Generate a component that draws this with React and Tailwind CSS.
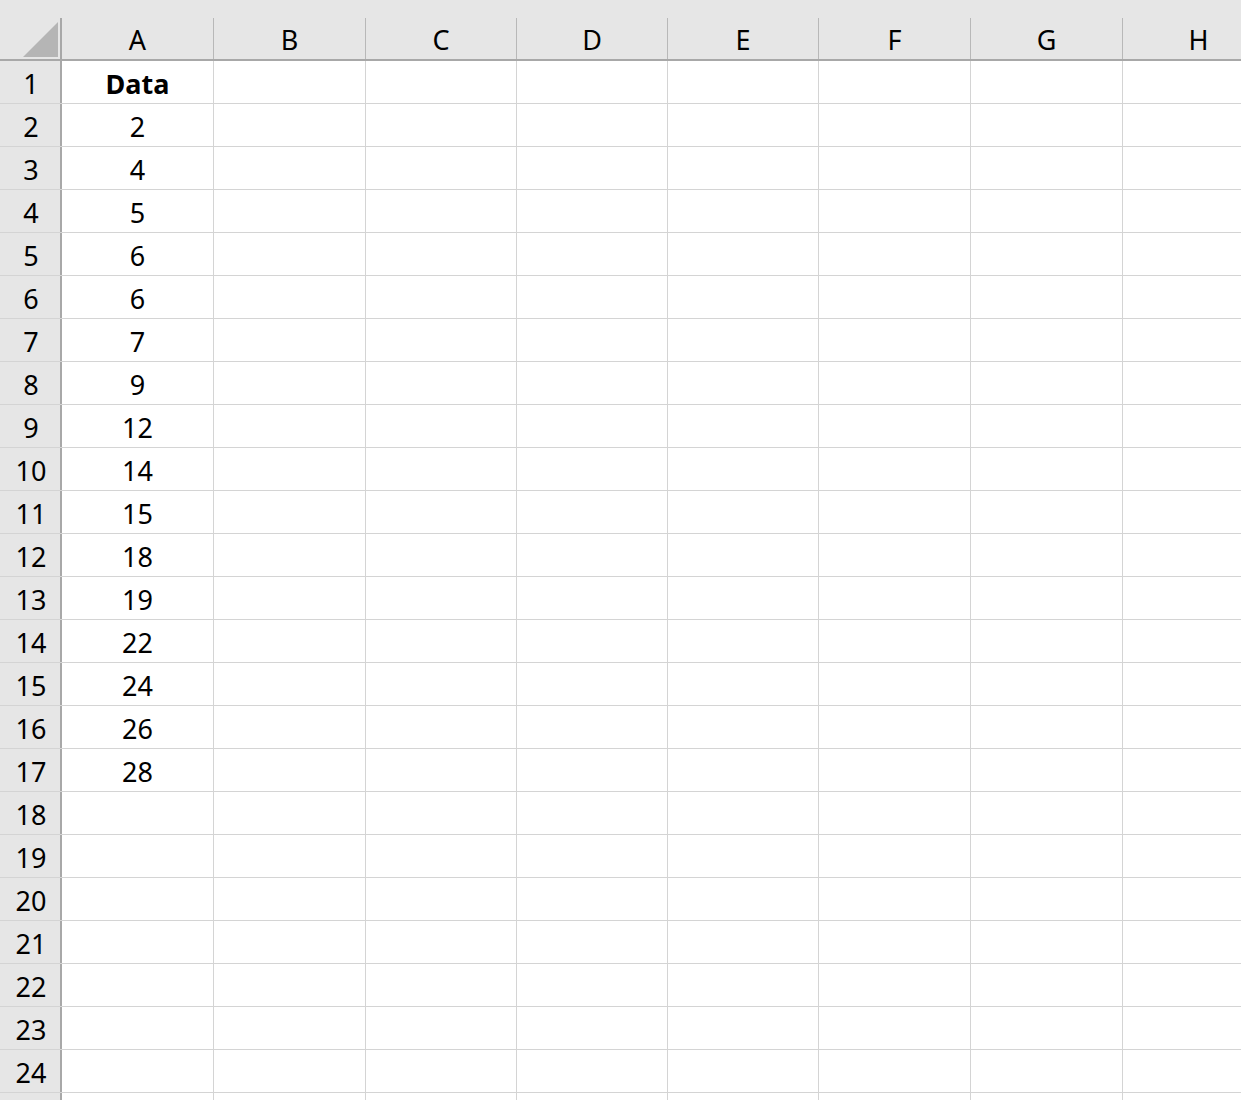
import React from 'react';

const columns = ['A', 'B', 'C', 'D', 'E', 'F', 'G', 'H'];
const widths = ['w-[152px]', 'w-[152px]', 'w-[151px]', 'w-[151px]', 'w-[151px]', 'w-[152px]', 'w-[152px]', 'w-[152px]'];
const values = ['Data', 2, 4, 5, 6, 6, 7, 9, 12, 14, 15, 18, 19, 22, 24, 26, 28];
const rowCount = 25;

const App = () => {
  return (
    <div className="w-[1241px] h-[1100px] overflow-hidden bg-white text-black font-['Noto_Sans','Open_Sans',sans-serif] text-[27px] leading-none">
      {/* Column headers */}
      <div className="flex h-[61px] bg-[#e6e6e6] border-b-2 border-[#a8a8a8]">
        <div className="w-[62px] shrink-0 pt-[18px]">
          <div className="h-full border-r-2 border-[#a8a8a8] relative">
            <svg className="absolute left-[23px] top-[4px]" width="35" height="35" viewBox="0 0 35 35">
              <polygon points="35,0 35,35 0,35" fill="#b5b5b5" />
            </svg>
          </div>
        </div>
        {columns.map((col, i) => (
          <div key={col} className={`${widths[i]} shrink-0 pt-[18px]`}>
            <div className="h-full flex items-center justify-center pt-[2px] border-r border-[#b8b8b8]">{col}</div>
          </div>
        ))}
      </div>

      {/* Rows */}
      {Array.from({ length: rowCount }, (_, r) => (
        <div key={r} className="flex h-[43px] border-b border-[#d4d4d4]">
          <div className="w-[62px] shrink-0 bg-[#e6e6e6] border-r-2 border-[#a8a8a8] flex items-center justify-center pt-[2px] pl-[2px]">
            {r < 24 ? r + 1 : ''}
          </div>
          {columns.map((col, i) => (
            <div
              key={col}
              className={`${widths[i]} shrink-0 border-r border-[#d4d4d4] flex items-center justify-center pt-[2px] ${r === 0 && i === 0 ? 'font-bold' : ''}`}
            >
              {i === 0 && values[r] !== undefined ? values[r] : ''}
            </div>
          ))}
        </div>
      ))}
    </div>
  );
};

export default App;
